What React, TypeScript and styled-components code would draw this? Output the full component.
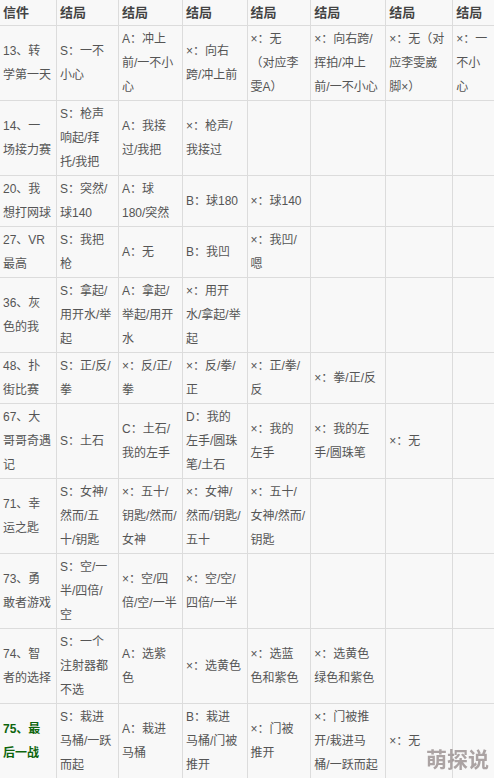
import styled, { createGlobalStyle } from 'styled-components';

const GlobalStyle = createGlobalStyle`
  html, body {
    margin: 0;
    padding: 0;
    background: #f8f8f8;
    overflow: hidden;
  }
  body {
    font-family: "Liberation Sans", "Noto Sans CJK SC", sans-serif;
  }
`;

// column widths incl. the 1px right border
const COLUMNS = [57, 62, 64, 64.5, 63.8, 75, 67, 42];

type Row = { title: string; final?: boolean; cells: string[] };

const ROWS: Row[] = [
  {
    title: '13、转学第一天',
    cells: [
      'S：一不小心',
      'A：冲上前/一不小心',
      '×：向右跨/冲上前',
      '×：无（对应李雯A）',
      '×：向右跨/挥拍/冲上前/一不小心',
      '×：无（对应李雯崴脚×）',
      '×：一不小心',
    ],
  },
  { title: '14、一场接力赛', cells: ['S：枪声响起/拜托/我把', 'A：我接过/我把', '×：枪声/我接过', '', '', '', ''] },
  { title: '20、我想打网球', cells: ['S：突然/球140', 'A：球180/突然', 'B：球180', '×：球140', '', '', ''] },
  { title: '27、VR最高', cells: ['S：我把枪', 'A：无', 'B：我凹', '×：我凹/嗯', '', '', ''] },
  { title: '36、灰色的我', cells: ['S：拿起/用开水/举起', 'A：拿起/举起/用开水', '×：用开水/拿起/举起', '', '', '', ''] },
  { title: '48、扑街比赛', cells: ['S：正/反/拳', '×：反/正/拳', '×：反/拳/正', '×：正/拳/反', '×：拳/正/反', '', ''] },
  {
    title: '67、大哥哥奇遇记',
    cells: ['S：土石', 'C：土石/我的左手', 'D：我的左手/圆珠笔/土石', '×：我的左手', '×：我的左手/圆珠笔', '×：无', ''],
  },
  {
    title: '71、幸运之匙',
    cells: ['S：女神/然而/五十/钥匙', '×：五十/钥匙/然而/女神', '×：女神/然而/钥匙/五十', '×：五十/女神/然而/钥匙', '', '', ''],
  },
  { title: '73、勇敢者游戏', cells: ['S：空/一半/四倍/空', '×：空/四倍/空/一半', '×：空/空/四倍/一半', '', '', '', ''] },
  {
    title: '74、智者的选择',
    cells: ['S：一个注射器都不选', 'A：选紫色', '×：选黄色', '×：选蓝色和紫色', '×：选黄色绿色和紫色', '', ''],
  },
  {
    title: '75、最后一战',
    final: true,
    cells: ['S：栽进马桶/一跃而起', 'A：栽进马桶', 'B：栽进马桶/门被推开', '×：门被推开', '×：门被推开/栽进马桶/一跃而起', '×：无', ''],
  },
];

const Table = styled.table`
  width: 495.3px;
  table-layout: fixed;
  border-collapse: separate;
  border-spacing: 0;
  font-size: 12px;
  line-height: 24px;
  color: #555;
`;

const HeadCell = styled.th<{ $w: number }>`
  box-sizing: border-box;
  width: ${(p) => p.$w}px;
  padding: 1px 5px 0 3px;
  font-size: 13px;
  font-weight: bold;
  color: #444;
  text-align: left;
  background: #f8f8f8;
  border-right: 1px solid #dcdcdc;
  border-bottom: 1px solid #dcdcdc;
`;

const Cell = styled.td<{ $final?: boolean }>`
  box-sizing: border-box;
  padding: 1px 5px 1px 3px;
  vertical-align: middle;
  background: #f8f8f8;
  border-right: 1px solid #dcdcdc;
  border-bottom: 1px solid #dcdcdc;
  color: ${(p) => (p.$final ? '#0d650d' : '#555')};
  font-weight: ${(p) => (p.$final ? 'bold' : 'normal')};
`;

const Watermark = styled.div`
  position: fixed;
  right: 5px;
  bottom: 8px;
  font-family: "Noto Sans CJK SC", sans-serif;
  font-size: 21px;
  font-weight: bold;
  line-height: 24px;
  color: rgba(125, 112, 112, 0.62);
`;

export default function App() {
  return (
    <>
      <GlobalStyle />
      <Table>
        <thead>
          <tr>
            {COLUMNS.map((w, i) => (
              <HeadCell key={i} $w={w}>
                {i === 0 ? '信件' : '结局'}
              </HeadCell>
            ))}
          </tr>
        </thead>
        <tbody>
          {ROWS.map((row) => (
            <tr key={row.title}>
              <Cell $final={row.final}>{row.title}</Cell>
              {row.cells.map((c, i) => (
                <Cell key={i}>{c}</Cell>
              ))}
            </tr>
          ))}
        </tbody>
      </Table>
      <Watermark>萌探说</Watermark>
    </>
  );
}
